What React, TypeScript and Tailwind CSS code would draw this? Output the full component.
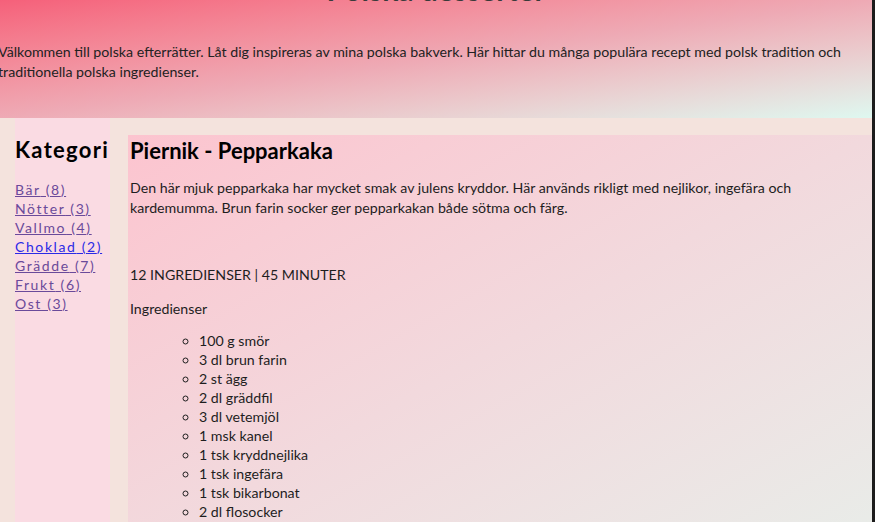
const INGREDIENTS = [
  "100 g smör",
  "3 dl brun farin",
  "2 st ägg",
  "2 dl gräddfil",
  "3 dl vetemjöl",
  "1 msk kanel",
  "1 tsk kryddnejlika",
  "1 tsk ingefära",
  "1 tsk bikarbonat",
  "2 dl flosocker",
  "1 krm salt",
  "smör och ströbröd till formen",
];

const CATEGORIES: Array<{ label: string; count: number; visited: boolean }> = [
  { label: "Bär", count: 8, visited: true },
  { label: "Nötter", count: 3, visited: true },
  { label: "Vallmo", count: 4, visited: true },
  { label: "Choklad", count: 2, visited: false },
  { label: "Grädde", count: 7, visited: true },
  { label: "Frukt", count: 6, visited: true },
  { label: "Ost", count: 3, visited: true },
];

export default function App() {
  return (
    <div className="h-[522px] overflow-hidden bg-[#f4e3dd] font-['Lato','Noto_Sans',sans-serif] text-[#1e1e1e] border-r-[3px] border-[#1c1c1c]">
      <header className="flex flex-col h-[118px] bg-gradient-to-br from-[#f5607a] via-[#eeaab5] to-[#def8f0]">
        <h1 className="-mt-[29px] text-center text-[30px] font-bold leading-9 text-[#3a3a3a]">
          Polska desserter
        </h1>
        <p className="mt-[35px] -ml-[2px] w-[860px] text-[14.2px] leading-5 text-[#222]">
          Välkommen till polska efterrätter. Låt dig inspireras av mina polska bakverk. Här hittar du många populära recept
          med polsk tradition och traditionella polska ingredienser.
        </p>
      </header>

      <main className="flex gap-[18px] pl-[15px]">
        <aside className="w-[95px] h-[420px] shrink-0 bg-[#fadbe3] pt-[18px]">
          <h2 className="text-[22px] font-bold leading-7 tracking-[1.3px] text-black">Kategori</h2>
          <ul className="mt-[16px]">
            {CATEGORIES.map((c) => (
              <li key={c.label} className="text-[14px] leading-[19px] tracking-[1.6px]">
                <a
                  href="#"
                  className={
                    c.visited ? "underline text-[#6a4a9a]" : "underline text-[#2a2ae6]"
                  }
                >
                  {c.label} ({c.count})
                </a>
              </li>
            ))}
          </ul>
        </aside>

        <article className="mt-[17px] flex-1 bg-gradient-to-br from-[#fcc4cf] via-[#f2d9dd] to-[#e8ede9] pl-[2px] pt-[2px] h-[420px]">
          <h2 className="text-[22px] font-bold leading-7 text-black">Piernik - Pepparkaka</h2>
          <p className="mt-[13px] w-[700px] text-[14.2px] leading-5">
            Den här mjuk pepparkaka har mycket smak av julens kryddor. Här används rikligt med nejlikor, ingefära och
            kardemumma. Brun farin socker ger pepparkakan både sötma och färg.
          </p>
          <p className="mt-[47px] text-[14.2px] leading-5">12 INGREDIENSER | 45 MINUTER</p>
          <p className="mt-[14px] text-[14.2px] leading-5">Ingredienser</p>
          <ul className="mt-[12px] pl-[69px] list-[circle]">
            {INGREDIENTS.map((i) => (
              <li key={i} className="text-[14.2px] leading-[19px]">
                {i}
              </li>
            ))}
          </ul>
        </article>
      </main>
    </div>
  );
}
